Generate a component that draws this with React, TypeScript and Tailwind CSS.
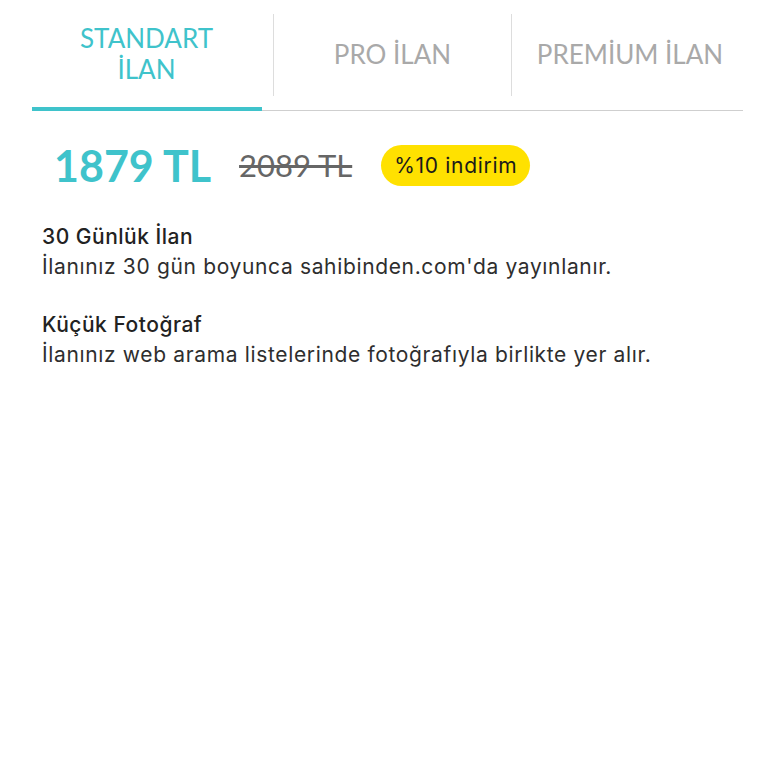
export default function App() {
  return (
    <div className="w-[768px] h-[768px] bg-white" style={{ fontFamily: "Lato, 'Open Sans', sans-serif" }}>
      <div className="mx-[32px] w-[711px]">
        <div className="flex h-[111px] border-b border-[#cfcfcf] relative">
          <div className="w-[241px] pr-[12px] relative">
            <div className="h-full flex flex-col items-center justify-center pb-[2px] text-[#3fc3cb] text-[26px] leading-[31px]">
              <span>STANDART</span>
              <span>İLAN</span>
            </div>
            <div className="absolute left-0 bottom-[-1px] w-[230px] h-[4px] bg-[#3fc3cb]" />
          </div>
          <div className="w-px bg-[#dddddd] mt-[14px] h-[82px]" />
          <div className="w-[237px] flex items-center justify-center pb-[2px] text-[#a9a9a9] text-[26px]">PRO İLAN</div>
          <div className="w-px bg-[#dddddd] mt-[14px] h-[82px]" />
          <div className="flex-1 flex items-center justify-center pl-[5px] pb-[2px] text-[#a9a9a9] text-[26px]">PREMİUM İLAN</div>
        </div>
        <div className="flex items-center mt-[34px] pl-[22px] h-[41px]">
          <span className="text-[#3fc3cb] text-[43px] font-bold leading-none">1879 TL</span>
          <span className="ml-[28px] text-[#666666] text-[31px] line-through leading-none">2089 TL</span>
          <span
            className="ml-[29px] bg-[#ffe100] rounded-full px-[13px] h-[41px] flex items-center text-[21px] tracking-[0.7px] text-[#1a1a1a]"
            style={{ fontFamily: "Inter, sans-serif" }}
          >
            %10 indirim
          </span>
        </div>
        <div
          className="mt-[36px] pl-[10px] text-[#2e2e2e] text-[21px] tracking-[0.65px] leading-[30px]"
          style={{ fontFamily: "Inter, sans-serif" }}
        >
          <div className="font-medium tracking-[0.5px] text-[#222]">30 Günlük İlan</div>
          <div>İlanınız 30 gün boyunca sahibinden.com'da yayınlanır.</div>
          <div className="font-medium tracking-[0.5px] text-[#222] mt-[28px]">Küçük Fotoğraf</div>
          <div>İlanınız web arama listelerinde fotoğrafıyla birlikte yer alır.</div>
        </div>
      </div>
    </div>
  );
}
